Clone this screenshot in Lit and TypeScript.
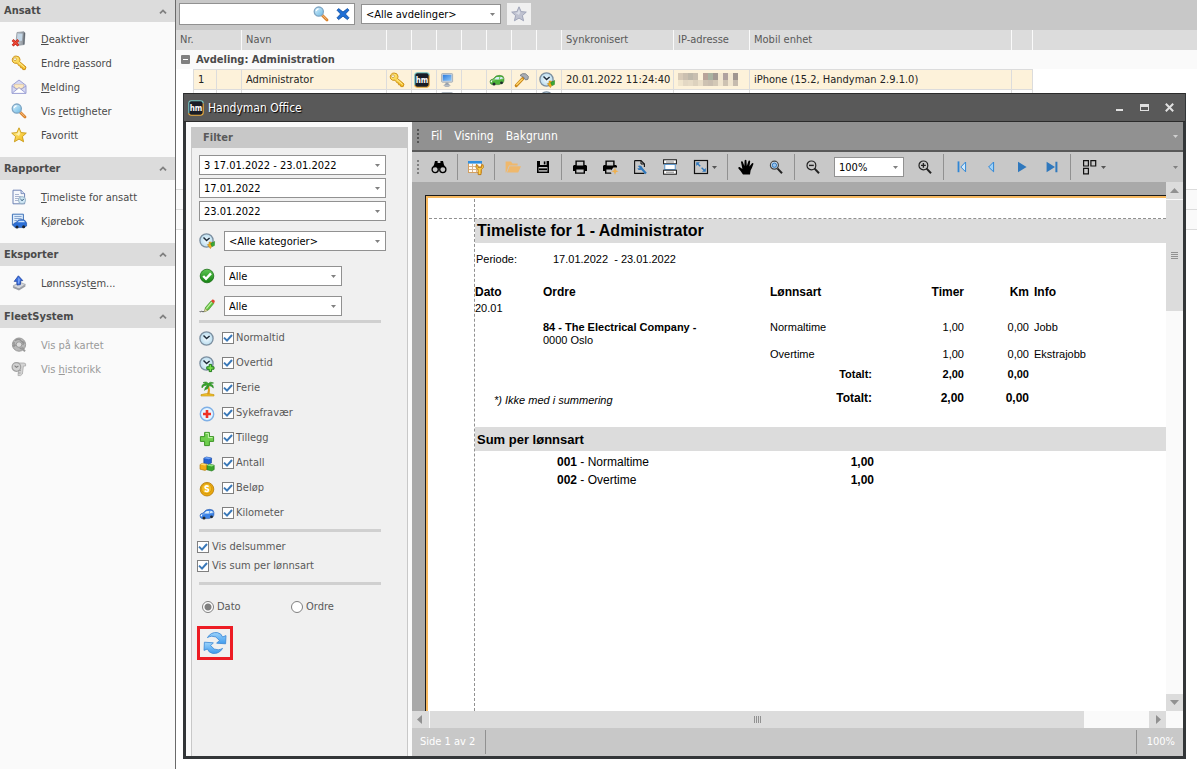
import { LitElement, html, svg, css, nothing, TemplateResult } from "lit";
import { customElement } from "lit/decorators.js";
import { classMap } from "lit/directives/class-map.js";

const icon = (body: unknown, w = 16, h = 16, label = "") => html`<svg
  class="icon" width=${w} height=${h} viewBox="0 0 ${w} ${h}"
  aria-hidden=${label ? "false" : "true"} aria-label=${label || nothing}>${body}</svg>`;

const clockFace = svg`<circle cx="7.5" cy="7.5" r="6.6" fill="url(#glass)" stroke="#7c8fa0" stroke-width="1.3"/>
  <path d="M4.5 4.5 7.6 7.6 10.6 5" fill="none" stroke="#1c2a38" stroke-width="1.4"/>`;

const car = (body: string, dark: string) => svg`
  <path d="M1 9.5 Q1 7.5 4 7 L7 4 Q11 2.6 14 4.2 L15 6.5 Q15.3 9.5 14 11 L10 12.6 H3 Q1 12 1 9.5Z" fill=${body} stroke=${dark} stroke-width=".5"/>
  <path d="M2 8.6 Q6 7.2 14.6 6.6" fill="none" stroke="#fff" stroke-width=".7" opacity=".6"/>
  <path d="M5.3 7 7.6 4.9 H10.6 L9.6 7.4Z M11.4 4.8 13.4 5.2 13.8 6.6 10.8 7.2Z" fill="#d9edfb"/>
  <circle cx="5" cy="12" r="1.5" fill="#23282e"/><circle cx="12.5" cy="10.8" r="1.4" fill="#23282e"/>
  <circle cx="2.4" cy="9.6" r=".8" fill="#fff"/>`;

const magnifier = svg`<path d="M9.2 9.2 14 14" stroke="#d9822b" stroke-width="2.8" stroke-linecap="round"/>
  <path d="M9.2 9 13.6 13.4" stroke="#f7c08a" stroke-width="1" />
  <circle cx="5.8" cy="5.6" r="4.6" fill="url(#lens)" stroke="#7fa6c4" stroke-width="1.3"/>
  <path d="M3.2 5.2 Q3.6 3.2 5.6 2.9" stroke="#fff" stroke-width="1.1" fill="none"/>`;

const starPath = "M8 .8 10.1 5.6 15.3 6.1 11.4 9.6 12.6 14.8 8 12.1 3.4 14.8 4.6 9.6 .7 6.1 5.9 5.6Z";

const icons: Record<string, TemplateResult> = {
  deactivate: icon(svg`<path d="M6 1.5 13 .8 14 2 13.2 13.5 6 14.5 4.8 13.2Z" fill="url(#steel)" stroke="#8d949d" stroke-width=".8"/>
    <path d="M6.8 3 11.6 2.6 11 9.8 6.2 10.3Z" fill="#c3d6e6"/><path d="M13 1.5 14 2.2 13.2 13.4 12.2 13.6Z" fill="#5d646c"/>
    <path d="M1.6 9 7.4 14.6 M7.4 9 1.6 14.6" stroke="#c42116" stroke-width="2.6"/><path d="M2 9.4 7 14.2 M7 9.4 2 14.2" stroke="#f2503c" stroke-width="1.1"/>`),
  key: icon(svg`<path d="M5 1 Q8.6 1 9 4.2 Q9 5.6 8.4 6.4 L15 12 14.2 14.6 11.8 14.6 11.4 12.8 9.8 13 9.6 11.2 8.2 11 6 8.2 Q3.4 8.9 1.8 7 Q.6 5 1.8 2.8 Q3 1 5 1Z" fill="url(#gold)" stroke="#c98a0d" stroke-width=".9"/>
    <circle cx="4" cy="4.2" r="1.4" fill="#fff" stroke="#b97f12" stroke-width=".6"/><path d="M8 7.6 13.6 12.6" stroke="#fff3a8" stroke-width=".9"/>`),
  mail: icon(svg`<path d="M1 6.4 8 1 15 6.4 V14.4 H1Z" fill="#d6d9f3" stroke="#9da1d4"/>
    <path d="M3.4 5.4 H12.6 V9 L8 10.6 3.4 9Z" fill="#fbe8c2" stroke="#d8b98a" stroke-width=".5"/>
    <path d="M1 7 6 10.2 M15 7 10 10.2 M1.4 14 8 8.6 14.6 14" fill="none" stroke="#9da1d4"/><path d="M2.4 13.8 8 9.6 13.6 13.8Z" fill="#fff"/>`),
  search: icon(magnifier),
  star: icon(svg`<path d=${starPath} fill="url(#gold)" stroke="#c99a14" stroke-width=".9"/><path d="M8 3 9.2 6.4 8 9 4 6.8 6.6 6.4Z" fill="#fff8c4" opacity=".8"/>`),
  greyStar: icon(svg`<path d=${starPath} fill="#bfc2d0" stroke="#9a9fb4" stroke-width=".9"/><path d="M8 3 9.2 6.4 8 9 4 6.8 6.6 6.4Z" fill="#e0e3ec" opacity=".8"/>`),
  report: icon(svg`<path d="M2 1.2 H10 L13.6 4.6 V14.8 H2Z" fill="#f6f8fc" stroke="#6d82b4"/><path d="M10 1.2 V4.6 H13.6" fill="#d3dcf0" stroke="#6d82b4" stroke-width=".8"/>
    <path d="M4 5.5 H8 M4 7.5 H10 M4 9.5 H8 M4 11.5 H7" stroke="#a9b4cf"/><circle cx="11" cy="11.2" r="3.6" fill="#cfe6f4" stroke="#8aa7bb" stroke-width=".8"/><path d="M9.4 10 11 11.6 12.8 10.2" fill="none" stroke="#2f5876" stroke-width="1"/>`),
  drivebook: icon(svg`<path d="M1.4 1.2 H12.4 V12 H1.4Z" fill="#dcebfb" stroke="#3f73b8"/><path d="M3.4 3.5 H10.6 M3.4 5.5 H10.6 M3.4 7.5 H6" stroke="#86a5cf"/>
    <path d="M2 12.4 Q2.4 9.8 5 9.4 L7.6 7 Q11 6 14 7.4 L15.6 10 V13 L13 14.6 H4Z" fill="#2c6fd6" stroke="#174a9c" stroke-width=".6"/><path d="M6.4 9.2 8.2 7.8 H13 L13.8 9.2Z" fill="#cbe3fb"/><circle cx="6" cy="14" r="1.5" fill="#1b2430"/><circle cx="12.6" cy="13.8" r="1.5" fill="#1b2430"/>`),
  export: icon(svg`<path d="M2.4 10.6 9 7.4 14.4 9.4 8 13.8 2.4 12.6Z" fill="#d4d6da" stroke="#8a8e96" stroke-width=".6"/><path d="M8 13.6 14.4 9.6 V11.6 L8 15.4 2.4 13 V11Z" fill="#9b9ea5"/>
    <path d="M7.4 .8 11.8 5.6 H9.8 L9.4 9.6 6 10 5.8 6.2 3.2 6.4Z" fill="#3a6fe0" stroke="#1f439e" stroke-width=".8"/><path d="M7.4 2.2 9 4.4 8 8.4 6.8 8.6Z" fill="#7ea6f5"/>`),
  globe: icon(svg`<circle cx="8" cy="7.6" r="6.6" fill="#b8b8b8" stroke="#9a9a9a"/><path d="M4 3.6 Q8 1 9.6 3.4 T13.6 6 M2 9 Q6 7 8 10 T13 11 M3 5 V10 M12 4 V8" fill="none" stroke="#929292" stroke-width="1.3"/>
    <circle cx="8" cy="7.6" r="2.8" fill="#dcdcdc" stroke="#9a9a9a"/><path d="M10.5 10.5 14 14.4" stroke="#9a9a9a" stroke-width="2"/>`),
  history: icon(svg`<path d="M6 2 H13 Q15.4 2 14.6 5 H12.4 L11.4 13 Q10 15.4 7 14.6 L8 4Z" fill="#d4d4d4" stroke="#a8a8a8" stroke-width=".8"/>
    <circle cx="5.4" cy="6" r="4.3" fill="#d2d2d2" stroke="#a0a0a0" stroke-width="1.2"/><path d="M3.6 4.6 5.4 6.4 7.4 5" stroke="#808080" fill="none" stroke-width="1.1"/><path d="M7 9.6 H10 M7 12 H9.6" stroke="#a0a0a0"/>`),
  clear: icon(svg`<path d="M3.6 2.6 8 6 12.4 2.6 14 4.2 10.4 8 14 11.8 12.4 13.6 8 10.2 3.6 13.6 2 11.8 5.6 8 2 4.2Z" fill="#1f6fd6" stroke="#0d4a9c" stroke-width=".8"/>`),
  hm: icon(svg`<rect x=".8" y=".8" width="14.4" height="14.4" rx="2.6" fill="#191c26"/><path d="M.8 13 V3.4 Q.8 .8 3.4 .8 H12.6 Q15.2 .8 15.2 3.4" fill="none" stroke="#7ccbc7" stroke-width="1.1"/>
    <path d="M15.2 3.4 V12.6 Q15.2 15.2 12.6 15.2 H3.4 Q.8 15.2 .8 13" fill="none" stroke="#f0b040" stroke-width="1.1"/><text x="8" y="10.8" text-anchor="middle" class="hm-text">hm</text>`),
  monitor: icon(svg`<rect x="2.6" y="1.6" width="11" height="8.6" rx=".8" fill="#cfd6de" stroke="#9aa4ae" stroke-width=".8"/><rect x="3.8" y="2.8" width="8.6" height="6" fill="url(#screen)"/>
    <path d="M6.6 10.6 H9.4 L9.8 13 H6.2Z" fill="#9aa3ad"/><ellipse cx="8" cy="13.4" rx="3" ry="1.1" fill="#b9c0c8" stroke="#8d97a2" stroke-width=".6"/>`),
  greenCar: icon(car("#4fb33a", "#2b7420")),
  blueCar: icon(car("#3b82e6", "#1c4c9e")),
  hammer: icon(svg`<path d="M2.2 13.6 9 6.4" stroke="#c98416" stroke-width="3" stroke-linecap="round"/><path d="M2.4 13 8.6 6.8" stroke="#ffd56b" stroke-width="1.4"/>
    <path d="M6 3.4 Q8 .8 11.6 1.8 L14.4 4.4 14 7.2 11.6 8 9.6 5.2Z" fill="#a9aeb5" stroke="#6f767e" stroke-width=".8"/>`),
  clock: icon(clockFace),
  clockArrow: icon(svg`${clockFace}<path d="M11.4 15.6 8.4 11.6 H10 V9 H12.4 V11.6 H14Z" fill="#f2b01e" stroke="#b97c0c" stroke-width=".5"/><path d="M11.6 10.6 15.6 8.4 15.4 12.6 13 13.6Z" fill="#39a935" stroke="#1f7a1c" stroke-width=".5"/>`),
  clockPlus: icon(svg`${clockFace}<path d="M10.2 8.4 H12.6 V10.8 H15 V13.2 H12.6 V15.6 H10.2 V13.2 H7.8 V10.8 H10.2Z" fill="#7be04a" stroke="#1f7a1c"/>`),
  ok: icon(svg`<circle cx="8" cy="8" r="6.8" fill="url(#green)" stroke="#1a6e17" stroke-width=".8"/><path d="M4.2 8 7 10.8 12 5.4" stroke="#fff" stroke-width="2.4" fill="none"/>`),
  pencil: icon(svg`<path d="M.6 13 l1 1 1.2-1 1 1 1.2-.6" fill="none" stroke="#555" stroke-width="1"/><path d="M5.6 13.6 6.4 9.6 12 3 14.8 5.4 9.4 12Z" fill="#5fc23c" stroke="#3f8f27" stroke-width=".6"/>
    <path d="M7.4 10.6 12.8 4.2" stroke="#c4f0a6" stroke-width="1.2"/><path d="M12 3 13.4 1.4 Q15.8 1.2 15.8 3.8 L14.8 5.4Z" fill="#e0452f"/><path d="M5.4 13.8 6.2 10.8 8.4 12.4Z" fill="#f7dfae" stroke="#8c7a50" stroke-width=".4"/>`),
  palm: icon(svg`<path d="M2 13.6 Q8 11.4 15 13.6 V15 H2Z" fill="#f2c52e" stroke="#c08f10" stroke-width=".6"/><path d="M8 13.4 Q9.8 9 8.4 4.6 L10 4.6 Q11.6 9 10.6 13.4Z" fill="#d99a1c"/>
    <path d="M9 4.6 Q4.6 3.6 3 7 Q2 3 6.4 2.8 Q4.8 1.6 4 1.6 Q8 0 9.2 2.6 Q11.4 0 14.6 2 Q12 2.2 11.4 3.2 Q14.6 3.2 14.4 7 Q12 4.4 10 4.8 L8.4 8 Q6.6 8 5.6 9.4 Q5.6 6 9 4.6Z" fill="#3aa62c" stroke="#1f7a1c" stroke-width=".5"/>`),
  health: icon(svg`<circle cx="8" cy="8" r="6.7" fill="#e5f3ff" stroke="#7fb0e6" stroke-width="1.4"/><path d="M6.7 4 H9.3 V6.7 H12 V9.3 H9.3 V12 H6.7 V9.3 H4 V6.7 H6.7Z" fill="#ee3124"/>`),
  plus: icon(svg`<path d="M5.6 1.4 H10.4 V5.6 H14.6 V10.4 H10.4 V14.6 H5.6 V10.4 H1.4 V5.6 H5.6Z" fill="#6fce4e" stroke="#3d9427"/><path d="M6.6 2.4 H9.4 V6.6 H13.6" fill="none" stroke="#c6f5b0"/>`),
  cubes: icon(svg`<path d="M4.8 2.2 7.4 1 12.6 2 12.4 7 9.8 8 4.8 7Z" fill="#2461d0" stroke="#123f96" stroke-width=".6"/><path d="M4.8 2.2 7.4 1 12.6 2 9.8 3.2Z" fill="#6ea2f5"/>
    <path d="M1 8.6 3.2 7.4 8 8.4 V13.4 L6 14.4 1 13.2Z" fill="#f0ac18" stroke="#a97408" stroke-width=".6"/><path d="M1 8.6 3.2 7.4 8 8.4 6 9.6Z" fill="#ffdb6e"/>
    <path d="M8 9.6 10.4 8.2 15.2 9.2 V13.6 L12.8 15 8 13.8Z" fill="#3aa62c" stroke="#1c701a" stroke-width=".6"/><path d="M8 9.6 10.4 8.2 15.2 9.2 12.8 10.6Z" fill="#8fe07c"/>`),
  coin: icon(svg`<circle cx="8" cy="8.2" r="6.8" fill="#eaa80e" stroke="#b57a06" stroke-width=".8"/><circle cx="7.6" cy="7.6" r="5" fill="#f5bd24" stroke="#c98f0c" stroke-width=".7"/>
    <path d="M9.6 5.6 Q7.6 4.2 6.2 5.6 Q5.6 7.2 7.8 7.7 Q10 8.2 9.2 9.8 Q7.6 11.2 5.6 9.6" fill="none" stroke="#fff" stroke-width="1.6"/>`),
  refresh: icon(svg`<path d="M4.4 6.6 Q8 .8 14.4 1.6 Q18.4 2.4 19.6 6 L23 4.6 22.6 12.8 13.6 12.2 16.4 9.4 Q13 4.6 8.6 5.2 Q6 5.6 4.4 6.6Z" fill="url(#blue)" stroke="#3a86d4" stroke-width=".8"/>
    <path d="M19.6 17.4 Q16 23.2 9.6 22.4 Q5.6 21.6 4.4 18 L1 19.4 1.4 11.2 10.4 11.8 7.6 14.6 Q11 19.4 15.4 18.8 Q18 18.4 19.6 17.4Z" fill="url(#blue)" stroke="#3a86d4" stroke-width=".8"/>`, 24, 24),
  binoculars: icon(svg`<path d="M4 2 H6.6 V4 H9.4 V2 H12 L13.4 7.4 H9.4 V6 H6.6 V7.4 H2.6Z" /><circle cx="4.2" cy="10.6" r="3.1" fill="none" stroke="#000" stroke-width="1.3"/><circle cx="11.8" cy="10.6" r="3.1" fill="none" stroke="#000" stroke-width="1.3"/><path d="M2 8 H6.6 L7.4 9.6 H8.6 L9.4 8 H14 L13 6 H3Z"/>`),
  design: icon(svg`<rect x=".5" y="2.5" width="13" height="11" fill="#fffaf2" stroke="#d3a061"/><rect x="0" y="2" width="14" height="2.6" fill="#2f8fe0"/><path d="M1 7.5 H13 M1 10.5 H13 M4.5 5 V13 M8.5 5 V13" stroke="#d8b48c"/>
    <path d="M8.4 5.6 Q6.8 8.6 10 10.6 L10.2 15.6 H13 L13.2 10.6 Q16.6 8.6 15 5.6 L13.4 6.4 V8.6 H10 V6.4Z" fill="#ffd34a" stroke="#b8720c" stroke-width=".9"/>`),
  open: icon(svg`<path d="M.6 13.4 V2.6 H6 L7.4 4.4 H12.6 V6.4 H4 L1.2 13.4Z M4.6 7.2 H16 L13.2 13.4 H2Z" fill="#efb86c"/>`),
  save: icon(svg`<path d="M2 2 H14 V14 H2Z"/><path d="M5 2 H11.6 V6 H5Z" fill="#c8c8c8"/><path d="M8.8 2.4 H10.4 V5.4 H8.8Z"/><path d="M3.6 8 H12.4 V12.6 H3.6Z" fill="#c8c8c8"/><path d="M4 9.4 H12 V11.2 H4Z"/>`),
  print: icon(svg`<path d="M3.4 1.4 H12.6 V6 H14 L15 7 V12 H13 V14.8 H3 V12 H1 V7 L2 6 H3.4Z"/><path d="M4.8 2.8 H11.2 V6.4 H4.8Z M4.4 10.4 H11.6 V13.4 H4.4Z" fill="#c8c8c8"/>`),
  quickPrint: icon(svg`<path d="M3.4 1.4 H12.6 V6 H14 L15 7 V8.4 H11.4 L8.6 12 9.4 14.8 H3 V12 H1 V7 L2 6 H3.4Z"/><path d="M4.8 2.8 H11.2 V6.4 H4.8Z M4.4 10.4 H9 V13.4 H4.4Z" fill="#c8c8c8"/><path d="M13 8.4 14 11.2 16.6 12.2 14 13.2 13 16 12 13.2 9.4 12.2 12 11.2Z" fill="#efb050"/>`),
  pageSetup: icon(svg`<path d="M2.6 1.6 H9 L12.4 5 V8 M12.4 14.4 H2.6 V1.6" fill="none" stroke="#111" stroke-width="1.1"/><path d="M9 1.6 V5 H12.4" fill="none" stroke="#111"/><path d="M9.6 9.6 14 14.4" stroke="#2f78bd" stroke-width="2.2"/><path d="M5.8 7 Q9 5.6 10.4 8.4 Q10.4 10.8 8.4 11 Q6 11.6 5.4 9.2 L8 9.2Z" fill="#2f78bd"/>`),
  headerFooter: icon(svg`<rect x="1.6" y=".8" width="12.8" height="4" fill="#fff" stroke="#111"/><rect x="2.8" y="5.4" width="10.4" height="5.2" fill="#fff" stroke="#4a90cf" stroke-width=".9"/><rect x="1.6" y="11.2" width="12.8" height="4" fill="#fff" stroke="#111"/><path d="M4 3 H12 M4 13.2 H12" stroke="#888"/>`),
  scale: icon(svg`<rect x="1.5" y="1.5" width="13" height="13" fill="none" stroke="#111" stroke-width="1.2"/><path d="M4.4 4.4 11.6 11.6" stroke="#2f78bd" stroke-width="1.4" stroke-dasharray="4 2"/><path d="M3.2 3.2 H7 L3.2 7Z M12.8 12.8 H9 L12.8 9Z" fill="#2f78bd"/>`),
  hand: icon(svg`<path d="M5 15.4 Q3 12 .4 9.4 Q0 7.8 1.6 8 L4.4 10 3 3 Q3.4 1.6 4.6 2.6 L6.4 7 6.6 1.4 Q7.6 0 8.4 1.2 L8.8 7 10.6 1.8 Q12 1 12.2 2.4 L11.4 7.6 14 4.2 Q15.6 3.6 15.4 5 Q14 9 12.6 11.6 L12 15.4Z"/>`),
  lensBlue: icon(svg`<path d="M9.4 9.4 14 14.2" stroke="#222" stroke-width="2"/><circle cx="6.4" cy="6.2" r="4" fill="#d3e4f5" stroke="#444" stroke-width="1.2"/><circle cx="6.4" cy="6.2" r="2.2" fill="#9cc3ea" stroke="#2f78bd"/>`),
  zoomOut: icon(svg`<path d="M9.4 9.4 14 14.2" stroke="#222" stroke-width="2"/><circle cx="6.4" cy="6.4" r="4.4" fill="none" stroke="#222" stroke-width="1.2"/><path d="M4 6.4 H8.8" stroke="#222" stroke-width="1.4"/>`),
  zoomIn: icon(svg`<path d="M9.4 9.4 14 14.2" stroke="#222" stroke-width="2"/><circle cx="6.4" cy="6.4" r="4.4" fill="none" stroke="#222" stroke-width="1.2"/><path d="M4 6.4 H8.8 M6.4 4 V8.8" stroke="#222" stroke-width="1.4"/>`),
  first: icon(svg`<path d="M4.5 2.4 V13.2" stroke="#2f86d6" stroke-width="1.8"/><path d="M11.6 3 V12.8 L6.8 8Z" fill="#cfe8fb" stroke="#2f86d6"/>`),
  prev: icon(svg`<path d="M9.6 3 V12.8 L4.6 8Z" fill="#9fd2f8" stroke="#2f86d6"/>`),
  next: icon(svg`<path d="M4 2.8 12.6 8 4 13.2Z" fill="#2f78bd"/>`),
  last: icon(svg`<path d="M2.6 2.8 11 8 2.6 13.2Z M11.4 2.8 H13.4 V13.2 H11.4Z" fill="#2f78bd"/>`),
  pages: icon(svg`<path d="M1.6 1.6 H6.4 V7 H1.6Z M8.9 1.6 H13.7 V7 H8.9Z M1.6 9.4 H6.4 V14.8 H1.6Z" fill="none" stroke="#111" stroke-width="1.2"/>`),
};

const caret = html`<svg class="caret" width="5" height="3" viewBox="0 0 5 3" aria-hidden="true"><path d="M0 0H5L2.5 3Z" fill="currentColor"/></svg>`;

interface NavItem { icon: string; text: unknown; off?: boolean }
const sections: { title: string; items: NavItem[] }[] = [
  { title: "Ansatt", items: [
    { icon: "deactivate", text: html`<u>D</u>eaktiver` },
    { icon: "key", text: html`Endre <u>p</u>assord` },
    { icon: "mail", text: html`<u>M</u>elding` },
    { icon: "search", text: html`Vis <u>r</u>ettigheter` },
    { icon: "star", text: "Favoritt" } ] },
  { title: "Rapporter", items: [
    { icon: "report", text: html`<u>T</u>imeliste for ansatt` },
    { icon: "drivebook", text: html`K<u>j</u>ørebok` } ] },
  { title: "Eksporter", items: [{ icon: "export", text: html`Lønnssyst<u>e</u>m...` }] },
  { title: "FleetSystem", items: [
    { icon: "globe", text: "Vis på kartet", off: true },
    { icon: "history", text: html`Vis <u>h</u>istorikk`, off: true } ] },
];

const kinds = [
  ["clock", "Normaltid"], ["clockPlus", "Overtid"], ["palm", "Ferie"], ["health", "Sykefravær"],
  ["plus", "Tillegg"], ["cubes", "Antall"], ["coin", "Beløp"], ["blueCar", "Kilometer"],
];

const mosaic = [
  ["#d8cbb8", "#cbc0b0", "#bfb9ab", "#c9bfb0", "#fdf2da", "#b9a49a", "#aab3a2", "#a39a94", "#f3e8d2", "#b0a2a0", "#f3e8d2", "#a09690"],
  ["#f0e5cd", "#e3d8c4", "#e6dbc6", "#ddd2be", "#e9dec8", "#cdc2b2", "#c9beb0", "#d3c8b6", "#f0e5cf", "#cdc2b2", "#f0e5cf", "#c6bbae"],
];

@customElement("app-root")
export class AppRoot extends LitElement {
  static styles = css`
    :host {
      display: block;
      font: 11px/14px Tahoma, "DejaVu Sans Condensed", "DejaVu Sans", sans-serif;
      color: #4a4a4a;
    }
    * { box-sizing: border-box; }
    button, input, select { font: inherit; color: inherit; margin: 0; }
    button { border: 0; background: none; padding: 0; display: flex; align-items: center; justify-content: center; }
    .defs { position: absolute; }
    .icon { display: block; flex: none; overflow: visible; }
    .hm-text { font: bold 8px "DejaVu Sans Condensed", sans-serif; fill: #fff; }

    .shell { display: grid; grid-template-columns: 176px minmax(0, 1fr); height: 100vh; overflow: hidden; background: #fff; }

    .side { background: #fafafa; border-right: 1px solid #6a6a6a; }
    .side h2 { margin: 0; height: 23px; padding: 0 8px 0 4px; display: flex; align-items: center; justify-content: space-between; background: #dcdcdc; font-size: 11px; }
    .side section:first-child h2 { height: 22px; }
    .side ul { list-style: none; margin: 0; padding: 5px 0 10px; }
    .side a { display: flex; align-items: center; gap: 14px; height: 24px; padding-left: 11px; color: inherit; text-decoration: none; }
    .side a span { padding-top: 2px; }
    .side .off { color: #999; }

    .main { position: relative; min-width: 0; }
    .topbar { display: flex; align-items: center; gap: 6px; height: 30px; padding: 0 3px 2px; background: #c8c8c8; }
    .search { display: flex; align-items: center; gap: 6px; width: 176px; height: 22px; padding-right: 3px; background: #fff; border: 1px solid #919191; }
    .search input { flex: 1; min-width: 0; border: 0; outline: 0; background: none; }
    .fav { width: 24px; height: 22px; background: #f0f0f0; }

    .select { display: inline-grid; align-items: center; height: 20px; background: #fff; border: 1px solid #919191; color: #000; }
    .select select { grid-area: 1 / 1; appearance: none; width: 100%; height: 18px; padding: 1px 16px 0 4px; border: 0; background: none; outline: 0; }
    .select .caret { grid-area: 1 / 1; justify-self: end; margin-right: 5px; color: #808080; pointer-events: none; }
    .dept { width: 140px; }

    .grid { width: 100%; table-layout: fixed; border-collapse: separate; border-spacing: 0; }
    .grid td, .grid th { padding: 0 4px; text-align: left; white-space: nowrap; overflow: hidden; }
    .grid th { height: 20px; background: #dcdcdc; border-right: 1px solid #fafafa; font-weight: normal; color: #595959; }
    .grid th:last-child { border-right: 0; }
    .grid .group td { height: 19px; background: #fafafa; font-weight: bold; padding-left: 5px; }
    .grid .lines td { height: 20px; border-top: 1px solid #dcdcdc; }
    .group div { display: flex; align-items: center; gap: 6px; }
    .row td { height: 20px; border-top: 1px solid #dcdcdc; border-right: 1px solid #dcdcdc; color: #222; }
    .row td:first-child, .row td:last-child { border-top: 0; }
    .row td:last-child { border-right: 0; }
    .row td.ic { padding: 0 0 0 2px; }
    .row.sel td { background: #fdf2da; }
    .row.sel td:first-child, .row.sel td:last-child { background: #fff; }
    .clip { height: 18px; overflow: hidden; }

    .window { position: absolute; inset: 93px 11px 10px 7px; display: grid; grid-template-rows: 29px minmax(0, 1fr); background: #333638; border: solid #333638; border-width: 0 3px 3px; }
    .title { display: flex; align-items: center; margin: 0 -2px; padding: 0 4px; background: #595959; border-top: 1px solid #2b2b2b; border-bottom: 1px solid #2b2b2b; color: #fff; }
    .title h1 { flex: 1; margin: 0 0 0 4px; font-size: 12px; font-weight: normal; text-shadow: 1px 1px 1px #000; }
    .title button { width: 25px; height: 20px; }
    .title .close { width: 24px; }
    .body { display: grid; grid-template-columns: 226px minmax(0, 1fr); background: #fafafa; min-height: 0; }

    .filter { margin: 5px 4px 0 5px; border: 1px solid #c8c8c8; border-width: 0 1px; background: #f0f0f0; }
    .filter h2 { margin: 0; height: 21px; padding-left: 11px; background: #c8c8c8; font-size: 11px; line-height: 22px; color: #595959; }
    .fields { display: flex; flex-direction: column; padding: 7px 0 0 7px; }
    .wide { width: 187px; margin-bottom: 3px; }
    .with-icon { display: flex; align-items: center; gap: 9px; margin-bottom: 10px; }
    .with-icon.cat { margin: 7px 0 15px; }
    .cat .select { width: 162px; }
    .half { width: 118px; }
    .rule { width: 182px; height: 3px; margin: 0; border: 0; background: #d0d0d0; }
    .gap-s { margin-top: -6px; }
    .check { display: flex; align-items: center; gap: 2px; color: #595959; }
    .check input { appearance: none; width: 12px; height: 12px; background: #fff; border: 1px solid #808080; }
    .check input:checked { background: #fff url("data:image/svg+xml,%3Csvg xmlns='http://www.w3.org/2000/svg' viewBox='0 0 10 10'%3E%3Cpath d='M1 4.6 4 7.6 9 2' fill='none' stroke='%233a78b8' stroke-width='2'/%3E%3C/svg%3E") center / 10px 10px; }
    .kinds { display: grid; grid-auto-rows: 25px; padding: 3px 0; }
    .kind { display: flex; align-items: center; gap: 7px; }
    .kind .check { padding-bottom: 2px; }
    .sums { display: grid; grid-auto-rows: 19px; align-items: center; padding: 5px 0 7px; margin-left: -2px; }
    .sums .check, .radios .check { gap: 3px; }
    .radios { display: grid; grid-template-columns: 89px 89px; padding: 15px 0 12px 3px; }
    .radios input { border-radius: 50%; }
    .radios input:checked { background: radial-gradient(circle, #808080 0 3px, #fff 4px); }
    .refresh { width: 36px; height: 34px; margin-left: -2px; border: 3px solid #ed1c24; }

    .viewer { display: grid; grid-template-rows: 28px 32px minmax(0, 1fr) 28px; min-height: 0; }
    .menu { display: flex; align-items: center; gap: 12px; padding: 0 5px; background: #919191; color: #fff; font-size: 12px; }
    .menu .spacer, .tools .spacer { flex: 1; }
    .menu .caret { color: #d0d0d0; }
    .grip { width: 2px; height: 14px; background: repeating-linear-gradient(#555 0 2px, transparent 2px 4px); }
    .tools { display: flex; align-items: center; padding: 0 5px; background: #c8c8c8; border-top: 2px solid #595959; }
    .tools .grip { margin-right: 5px; background: repeating-linear-gradient(#808080 0 2px, transparent 2px 4px); }
    .tools button { flex: none; width: 30px; height: 26px; }
    .tools .drop { width: 39px; gap: 3px; }
    .tools .caret { color: #555; }
    .tools .spacer + .caret, .zoom .caret { color: #808080; }
    .tools .sep { flex: none; width: 1px; height: 26px; margin: 0 3px; background: #919191; }
    .zoom { width: 70px; margin: 0 6px; }
    .view { display: grid; grid-template-columns: minmax(0, 1fr) 17px; grid-template-rows: minmax(0, 1fr) 17px; min-height: 0; }
    .canvas { overflow: hidden; padding: 13px 0 0 13px; background: #a9a9a9; }
    .paper { height: 100%; padding: 23px 0 0 49px; background: #fff; border: solid #1a1a1a; border-width: 1px 0 0 1px; box-shadow: inset 2px 2px #f5b860; position: relative; }
    .guide-h, .guide-v { position: absolute; }
    .guide-h { left: 3px; right: 0; top: 22px; border-top: 1px dashed #919191; }
    .guide-v { top: 3px; bottom: 0; left: 48px; border-left: 1px dashed #919191; }

    .vbar, .hbar { display: flex; background: #fafafa; }
    .vbar { flex-direction: column; }
    .vbar button, .hbar button { flex: none; width: 17px; height: 17px; background: #dcdcdc; color: #919191; }
    .track { flex: 1; display: flex; }
    .vbar .track { padding-top: 1px; } .hbar .track { padding-left: 1px; }
    .thumb { display: flex; align-items: center; justify-content: center; background: #dcdcdc; }
    .vbar .thumb { width: 17px; height: 22.5%; }
    .hbar .thumb { width: 91%; height: 17px; }
    .vbar .lines { width: 7px; height: 7px; background: repeating-linear-gradient(#919191 0 1px, transparent 1px 2px); }
    .hbar .lines { width: 7px; height: 7px; background: repeating-linear-gradient(90deg, #919191 0 1px, transparent 1px 2px); }

    .status { display: flex; align-items: center; background: #c8c8c8; color: #fff; }
    .status span { padding: 0 8px; }
    .status i { width: 1px; height: 24px; margin: 0 2px; background: #919191; }
    .status .spacer { flex: 1; }

    .sheet { font-family: Arial, "Liberation Sans", sans-serif; color: #000; }
    .sheet h3 { margin: 0; height: 24px; padding-left: 2px; background: #dcdcdc; font-size: 16px; line-height: 24px; }
    .sheet h3.sub { margin-top: 18px; font-size: 13px; line-height: 26px; }
    .period { display: flex; margin: 0; padding: 9px 0 0 1px; line-height: 14px; }
    .period dt { width: 77px; } .period dd { margin: 0; }
    .times { width: 100%; margin-top: 19px; table-layout: fixed; border-spacing: 0; }
    .times th, .times td { padding: 0; text-align: left; vertical-align: top; white-space: nowrap; line-height: 14px; }
    .times thead th { height: 16px; font-size: 12px; }
    .times .num { text-align: right; }
    .times .info { padding-left: 5px; }
    .times .total { font-size: 12px; font-weight: bold; height: 16px; }
    .times .day td { height: 19px; } .times .order td { height: 27px; } .times .over td { height: 20px; } .times .part td { height: 24px; font-weight: bold; }
    .times .note { font-style: italic; padding-left: 19px; line-height: 18px; }
    .addr { display: block; line-height: 12px; }
    .sumlist { margin-top: 2px; border-spacing: 0; font-size: 12px; }
    .sumlist td { height: 18px; padding: 0 0 0 82px; width: 292px; }
    .sumlist td.num { width: 107px; padding: 0; text-align: right; font-weight: bold; }
  `;

  private select(value: string, label: string, cls: string) {
    return html`<span class="select ${cls}"><select aria-label=${label}><option>${value}</option></select>${caret}</span>`;
  }

  private check(label: string) {
    return html`<label class="check"><input type="checkbox" checked />${label}</label>`;
  }

  private tool(name: string, label: string, drop = false) {
    return html`<button class=${classMap({ drop })} title=${label} aria-label=${label}>${icons[name]}${drop ? caret : nothing}</button>`;
  }

  private defs() {
    const stop = (o: string, c: string) => svg`<stop offset=${o} stop-color=${c}/>`;
    return html`<svg class="defs" width="0" height="0" aria-hidden="true"><defs>
      <radialGradient id="glass">${stop("0", "#f4fbff")}${stop("1", "#b9dcee")}</radialGradient>
      <linearGradient id="lens" x2="1" y2="1">${stop("0", "#d9f1fd")}${stop("1", "#6bb9e4")}</linearGradient>
      <linearGradient id="gold" x2="1" y2="1">${stop("0", "#fff08a")}${stop("1", "#f2b616")}</linearGradient>
      <linearGradient id="steel" x2="1">${stop("0", "#d3dae1")}${stop("1", "#80868d")}</linearGradient>
      <linearGradient id="screen" x2="1" y2="1">${stop("0", "#2b7bdc")}${stop("1", "#8fc8fa")}</linearGradient>
      <linearGradient id="green" x2="0" y2="1">${stop("0", "#5fc653")}${stop("1", "#148212")}</linearGradient>
      <linearGradient id="blue" x2="0" y2="1">${stop("0", "#9ed4fb")}${stop("1", "#3f9bee")}</linearGradient>
    </defs></svg>`;
  }

  private sidebar() {
    return html`<nav class="side">${sections.map((s) => html`<section>
      <h2>${s.title}<svg width="8" height="5" viewBox="0 0 8 5" aria-hidden="true"><path d="M1 4.4 4 1.4 7 4.4" fill="none" stroke="#808080" stroke-width="1.8"/></svg></h2>
      <ul>${s.items.map((i) => html`<li><a href="#" class=${classMap({ off: !!i.off })}>${icons[i.icon]}<span>${i.text}</span></a></li>`)}</ul>
    </section>`)}</nav>`;
  }

  private employees() {
    const widths = [18, 23, 25, 145, 25, 25, 25, 25, 25, 25, 25, 112, 76, 262, 21];
    const plain = (withIcons: boolean) => html`<tr class="row">${[...widths, 0].map((_, i) => html`<td class="ic">${withIcons && i === 6 ? html`<div class="clip">${icons.monitor}</div>` : withIcons && i === 10 ? html`<div class="clip">${icons.clockArrow}</div>` : nothing}</td>`)}</tr>`;
    return html`<table class="grid">
      <colgroup>${widths.map((w) => html`<col width=${w} />`)}<col /></colgroup>
      <thead><tr><th colspan="3">Nr.</th><th>Navn</th>${[0, 1, 2, 3, 4, 5, 6].map(() => html`<th></th>`)}<th>Synkronisert</th><th>IP-adresse</th><th>Mobil enhet</th><th></th><th></th></tr></thead>
      <tbody>
        <tr class="group"><td colspan="16"><div><svg width="9" height="9" viewBox="0 0 9 9" aria-hidden="true"><rect width="9" height="9" rx="1" fill="#808080"/><path d="M2 4.5H7" stroke="#fff"/></svg>Avdeling: Administration</div></td></tr>
        <tr class="row sel"><td></td><td>1</td><td></td><td>Administrator</td>
          <td class="ic">${icons.key}</td><td class="ic">${icons.hm}</td><td class="ic">${icons.monitor}</td><td></td>
          <td class="ic">${icons.greenCar}</td><td class="ic">${icons.hammer}</td><td class="ic">${icons.clockArrow}</td>
          <td>20.01.2022 11:24:40</td>
          <td>${icon(mosaic.map((r, y) => r.map((c, x) => svg`<rect x=${x * 5} y=${y * 7} width="5" height=${y ? 6 : 7} fill=${c}/>`)), 60, 13)}</td>
          <td>iPhone (15.2, Handyman 2.9.1.0)</td><td></td><td></td></tr>
        ${plain(true)}${[0, 1, 2, 3].map(() => plain(false))}
        <tr class="group lines"><td colspan="16"></td></tr><tr class="group lines"><td colspan="16"></td></tr>
        <tr class="lines"><td colspan="16"></td></tr>
      </tbody>
    </table>`;
  }

  private filter() {
    return html`<form class="filter" @submit=${(e: Event) => e.preventDefault()}>
      <h2>Filter</h2>
      <div class="fields">
        ${this.select("3 17.01.2022 - 23.01.2022", "Uke", "wide")}
        ${this.select("17.01.2022", "Fra dato", "wide")}
        ${this.select("23.01.2022", "Til dato", "wide")}
        <div class="with-icon cat">${icons.clockArrow}${this.select("<Alle kategorier>", "Kategori", "")}</div>
        <div class="with-icon">${icons.ok}${this.select("Alle", "Godkjent", "half")}</div>
        <div class="with-icon">${icons.pencil}${this.select("Alle", "Signert", "half")}</div>
        <hr class="rule gap-s" />
        <div class="kinds">${kinds.map(([i, t]) => html`<div class="kind">${icons[i]}${this.check(t)}</div>`)}</div>
        <hr class="rule" />
        <div class="sums">${this.check("Vis delsummer")}${this.check("Vis sum per lønnsart")}</div>
        <hr class="rule" />
        <div class="radios">
          <label class="check"><input type="radio" name="sort" checked />Dato</label>
          <label class="check"><input type="radio" name="sort" />Ordre</label>
        </div>
        <button class="refresh" aria-label="Oppdater">${icons.refresh}</button>
      </div>
    </form>`;
  }

  private sheet() {
    return html`<article class="sheet">
      <h3>Timeliste for 1 - Administrator</h3>
      <dl class="period"><dt>Periode:</dt><dd>17.01.2022 &nbsp;- 23.01.2022</dd></dl>
      <table class="times">
        <colgroup><col width="68" /><col width="227" /><col width="102" /><col width="92" /><col width="65" /><col /></colgroup>
        <thead><tr><th>Dato</th><th>Ordre</th><th>Lønnsart</th><th class="num">Timer</th><th class="num">Km</th><th class="info">Info</th></tr></thead>
        <tbody>
          <tr class="day"><td colspan="6">20.01</td></tr>
          <tr class="order"><td></td><td><b>84 - The Electrical Company -</b><span class="addr">0000 Oslo</span></td><td>Normaltime</td><td class="num">1,00</td><td class="num">0,00</td><td class="info">Jobb</td></tr>
          <tr class="over"><td></td><td></td><td>Overtime</td><td class="num">1,00</td><td class="num">0,00</td><td class="info">Ekstrajobb</td></tr>
          <tr class="part"><td></td><td></td><td class="num">Totalt:</td><td class="num">2,00</td><td class="num">0,00</td><td></td></tr>
          <tr><td colspan="2" class="note">*) Ikke med i summering</td><td class="num total">Totalt:</td><td class="num total">2,00</td><td class="num total">0,00</td><td></td></tr>
        </tbody>
      </table>
      <h3 class="sub">Sum per lønnsart</h3>
      <table class="sumlist"><tbody>
        <tr><td><b>001</b> - Normaltime</td><td class="num">1,00</td></tr>
        <tr><td><b>002</b> - Overtime</td><td class="num">1,00</td></tr>
      </tbody></table>
    </article>`;
  }

  private viewer() {
    const sep = html`<span class="sep"></span>`;
    const arrow = (d: string, label: string) => html`<button aria-label=${label}><svg width="9" height="9" viewBox="0 0 9 9"><path d=${d} fill="currentColor"/></svg></button>`;
    return html`<section class="viewer">
      <div class="menu"><span class="grip"></span><button>Fil</button><button>Visning</button><button>Bakgrunn</button><span class="spacer"></span>${caret}</div>
      <div class="tools"><span class="grip"></span>
        ${this.tool("binoculars", "Søk")}${sep}${this.tool("design", "Tilpass")}${sep}
        ${this.tool("open", "Åpne")}${this.tool("save", "Lagre")}${sep}
        ${this.tool("print", "Skriv ut")}${this.tool("quickPrint", "Hurtigutskrift")}${this.tool("pageSetup", "Utskriftsformat")}${this.tool("headerFooter", "Topptekst og bunntekst")}${this.tool("scale", "Skaler", true)}${sep}
        ${this.tool("hand", "Hånd")}${this.tool("lensBlue", "Forstørr")}${sep}
        ${this.tool("zoomOut", "Zoom ut")}${this.select("100%", "Zoom", "zoom")}${this.tool("zoomIn", "Zoom inn")}${sep}
        ${this.tool("first", "Første side")}${this.tool("prev", "Forrige side")}${this.tool("next", "Neste side")}${this.tool("last", "Siste side")}${sep}
        ${this.tool("pages", "Flere sider", true)}<span class="spacer"></span>${caret}
      </div>
      <div class="view">
        <div class="canvas"><div class="paper"><span class="guide-h"></span><span class="guide-v"></span>${this.sheet()}</div></div>
        <div class="vbar">${arrow("M0 7 4.5 2 9 7Z", "Rull opp")}<div class="track"><div class="thumb"><span class="lines"></span></div></div>${arrow("M0 2 4.5 7 9 2Z", "Rull ned")}</div>
        <div class="hbar">${arrow("M6 0 1 4.5 6 9Z", "Rull til venstre")}<div class="track"><div class="thumb"><span class="lines"></span></div></div>${arrow("M3 0 8 4.5 3 9Z", "Rull til høyre")}</div>
      </div>
      <div class="status"><span>Side 1 av 2</span><i></i><span class="spacer"></span><i></i><span>100%</span></div>
    </section>`;
  }

  render() {
    return html`${this.defs()}
      <div class="shell">
        ${this.sidebar()}
        <main class="main">
          <div class="topbar">
            <div class="search"><input type="text" aria-label="Søk" />${icons.search}${icons.clear}</div>
            ${this.select("<Alle avdelinger>", "Avdeling", "dept")}
            <button class="fav" aria-label="Favoritt">${icons.greyStar}</button>
          </div>
          ${this.employees()}
          <div class="window" role="dialog" aria-label="Handyman Office">
            <header class="title">${icons.hm}<h1>Handyman Office</h1>
              <button aria-label="Minimer"><svg width="9" height="9" viewBox="0 0 9 9"><path d="M1 6H8V8H1Z" fill="#e0e0e0"/></svg></button>
              <button aria-label="Maksimer"><svg width="9" height="9" viewBox="0 0 9 9"><path d="M0 1H9V8H0Z M1 4V7H8V4Z" fill="#e0e0e0" fill-rule="evenodd"/></svg></button>
              <button class="close" aria-label="Lukk"><svg width="9" height="9" viewBox="0 0 9 9"><path d="M.8 .8 8.2 8.2M8.2 .8 .8 8.2" stroke="#e0e0e0" stroke-width="2"/></svg></button>
            </header>
            <div class="body">${this.filter()}${this.viewer()}</div>
          </div>
        </main>
      </div>`;
  }
}
